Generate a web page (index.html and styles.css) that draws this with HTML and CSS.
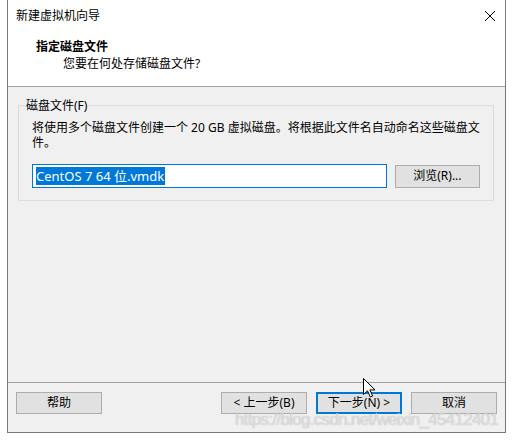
FILE: index.html
```html
<!DOCTYPE html>
<html lang="zh-CN">
<head>
<meta charset="utf-8">
<title>新建虚拟机向导</title>
<link rel="stylesheet" href="styles.css">
</head>
<body>
<div class="window">
  <div class="titlebar">
    <span class="title">新建虚拟机向导</span>
    <svg class="close" width="12" height="12" viewBox="0 0 12 12"><path d="M1 1 L11 11 M11 1 L1 11" stroke="#000" stroke-width="1" fill="none"/></svg>
  </div>
  <div class="header">
    <div class="h-title">指定磁盘文件</div>
    <div class="h-sub">您要在何处存储磁盘文件?</div>
  </div>
  <div class="content">
    <fieldset class="group">
      <legend class="legend">磁盘文件(F)</legend>
      <div class="inner">
        <p class="desc">将使用多个磁盘文件创建一个 20 GB 虚拟磁盘。将根据此文件名自动命名这些磁盘文件。</p>
        <div class="row">
          <div class="input"><span class="sel">CentOS 7 64 位.vmdk</span></div>
          <div class="btn browse">浏览(R)...</div>
        </div>
      </div>
    </fieldset>
  </div>
  <div class="footer">
    <div class="btn">帮助</div>
    <div class="spacer"></div>
    <div class="btn">&lt; 上一步(B)</div>
    <div class="btn primary">下一步(N) &gt;</div>
    <div class="btn">取消</div>
  </div>
  <svg class="cursor" width="13" height="20" viewBox="0 0 13 20"><path d="M0.5 0.5 L0.5 16.5 L4.5 12.8 L7.3 19 L9.6 18 L6.9 11.9 L12 11.9 Z" fill="#fff" stroke="#000" stroke-width="1" stroke-linejoin="miter"/></svg>
  <div class="watermark">https://blog.csdn.net/weixin_45412401</div>
</div>
</body>
</html>
```
FILE: styles.css
```css
html, body {
  margin: 0;
  padding: 0;
  background: #ffffff;
}
body {
  font-family: "Noto Sans", "Noto Sans CJK SC", sans-serif;
  font-size: 12px;
  color: #000;
}
.window {
  position: relative;
  margin-left: 7px;
  width: 497px;
  height: 432px;
  border: 1px solid #7a7a7a;
  border-top: none;
  background: #f0f0f0;
  display: flex;
  flex-direction: column;
  overflow: hidden;
}
.titlebar {
  height: 31px;
  background: #fff;
  display: flex;
  align-items: center;
  justify-content: space-between;
  padding: 0 9px 0 8px;
}
.title {
  line-height: 16px;
  margin-top: 1px;
}
.close {
  display: block;
  margin-top: 1px;
}
.header {
  background: #fff;
  border-bottom: 1px solid #a0a0a0;
  box-sizing: border-box;
  height: 56px;
  padding: 8px 0 0 28px;
}
.h-title {
  font-weight: bold;
  line-height: 16px;
}
.h-sub {
  line-height: 16px;
  margin-top: 1px;
  padding-left: 27px;
}
.content {
  flex: 1;
  padding: 11px 11px 0 10px;
}
.group {
  margin: 0;
  border: 1px solid #dcdcdc;
  padding: 0 13px 12px 7px;
  min-width: 0;
}
.legend {
  padding: 0 1px 0 0;
  line-height: 15px;
  color: #000;
}
.inner {
  padding-left: 6px;
}
.desc {
  margin: 7px 0 0 0;
  line-height: 15px;
}
.row {
  display: flex;
  align-items: center;
  gap: 8px;
  margin-top: 14px;
}
.input {
  width: 353px;
  height: 22px;
  border: 1px solid #0078d7;
  background: #fff;
  display: flex;
  align-items: center;
  padding-left: 3px;
  box-sizing: content-box;
}
.sel {
  background: #0078d7;
  color: #fff;
  font-size: 13px;
  line-height: 18px;
  padding-right: 1px;
}
.btn {
  width: 84px;
  height: 20px;
  border: 1px solid #adadad;
  background: #e1e1e1;
  display: flex;
  align-items: center;
  justify-content: center;
  line-height: 16px;
}
.browse {
  height: 21px;
}
.footer {
  height: 40px;
  border-top: 1px solid #a0a0a0;
  display: flex;
  align-items: flex-start;
  padding: 9px 8px 0 8px;
  gap: 9px;
}
.spacer {
  flex: 1;
}
.primary {
  border: 2px solid #0078d7;
  width: 82px;
  height: 18px;
}
.cursor {
  position: absolute;
  left: 355px;
  top: 378px;
}
.watermark {
  position: absolute;
  left: 227px;
  top: 410px;
  font-family: "Liberation Sans", Arial, sans-serif;
  font-size: 17px;
  letter-spacing: -0.7px;
  color: rgba(255, 255, 255, 0.55);
  text-shadow: 0 0 1px rgba(120, 120, 120, 0.6);
  white-space: nowrap;
  pointer-events: none;
}
```
